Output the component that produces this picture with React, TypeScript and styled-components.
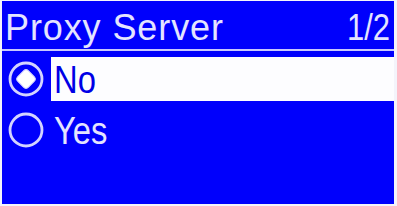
import styled, { createGlobalStyle } from "styled-components";

const GlobalStyle = createGlobalStyle`
  html, body {
    margin: 0;
    padding: 0;
    background: #f4f4fb;
  }
`;

const Screen = styled.div`
  margin: 1px 3px 0 2px;
  height: 203px;
  background: #0000fc;
  font-family: "Liberation Sans", Arial, sans-serif;
  color: #e4e4ff;
  overflow: hidden;
`;

const Header = styled.div`
  height: 48px;
  display: flex;
  justify-content: space-between;
  align-items: center;
  padding: 0 4px 0 3px;
  border-bottom: 2px solid #c8c8ff;
`;

const Title = styled.span`
  font-size: 36px;
  line-height: 36px;
  letter-spacing: 0.9px;
  margin-top: 5px;
`;

const Page = styled.span`
  font-size: 36px;
  line-height: 36px;
  margin-top: 5px;
  display: inline-block;
  transform: scaleX(0.86);
  transform-origin: right center;
`;

const List = styled.div`
  padding-top: 6px;
  display: flex;
  flex-direction: column;
  gap: 7px;
`;

const Row = styled.div`
  display: flex;
  height: 44px;
  align-items: center;
`;

const Mark = styled.div`
  width: 49px;
  height: 44px;
  display: flex;
  align-items: center;
  justify-content: center;
`;

const Label = styled.div<{ $active?: boolean }>`
  flex: 1;
  height: 44px;
  display: flex;
  align-items: center;
  padding-left: 3px;
  background: ${(p) => (p.$active ? "#fdfdff" : "transparent")};
  color: ${(p) => (p.$active ? "#0000e6" : "#e4e4ff")};
`;

const LabelText = styled.span`
  font-size: 39px;
  line-height: 39px;
  display: inline-block;
  transform: scaleX(0.84);
  transform-origin: left center;
`;

function Radio({ on }: { on?: boolean }) {
  return (
    <svg width="40" height="40" viewBox="0 0 40 40">
      <circle cx="19" cy="20" r="16" fill="none" stroke="#d4d4ff" strokeWidth="2.8" />
      {on && (
        <rect
          x="11.5"
          y="12.5"
          width="15"
          height="15"
          rx="3.5"
          fill="#ffffff"
          stroke="#d4d4ff"
          strokeWidth="1"
          transform="rotate(45 19 20)"
        />
      )}
    </svg>
  );
}

export default function App() {
  return (
    <>
      <GlobalStyle />
      <Screen>
        <Header>
          <Title>Proxy Server</Title>
          <Page>1/2</Page>
        </Header>
        <List>
          <Row>
            <Mark>
              <Radio on />
            </Mark>
            <Label $active>
              <LabelText>No</LabelText>
            </Label>
          </Row>
          <Row>
            <Mark>
              <Radio />
            </Mark>
            <Label>
              <LabelText>Yes</LabelText>
            </Label>
          </Row>
        </List>
      </Screen>
    </>
  );
}
